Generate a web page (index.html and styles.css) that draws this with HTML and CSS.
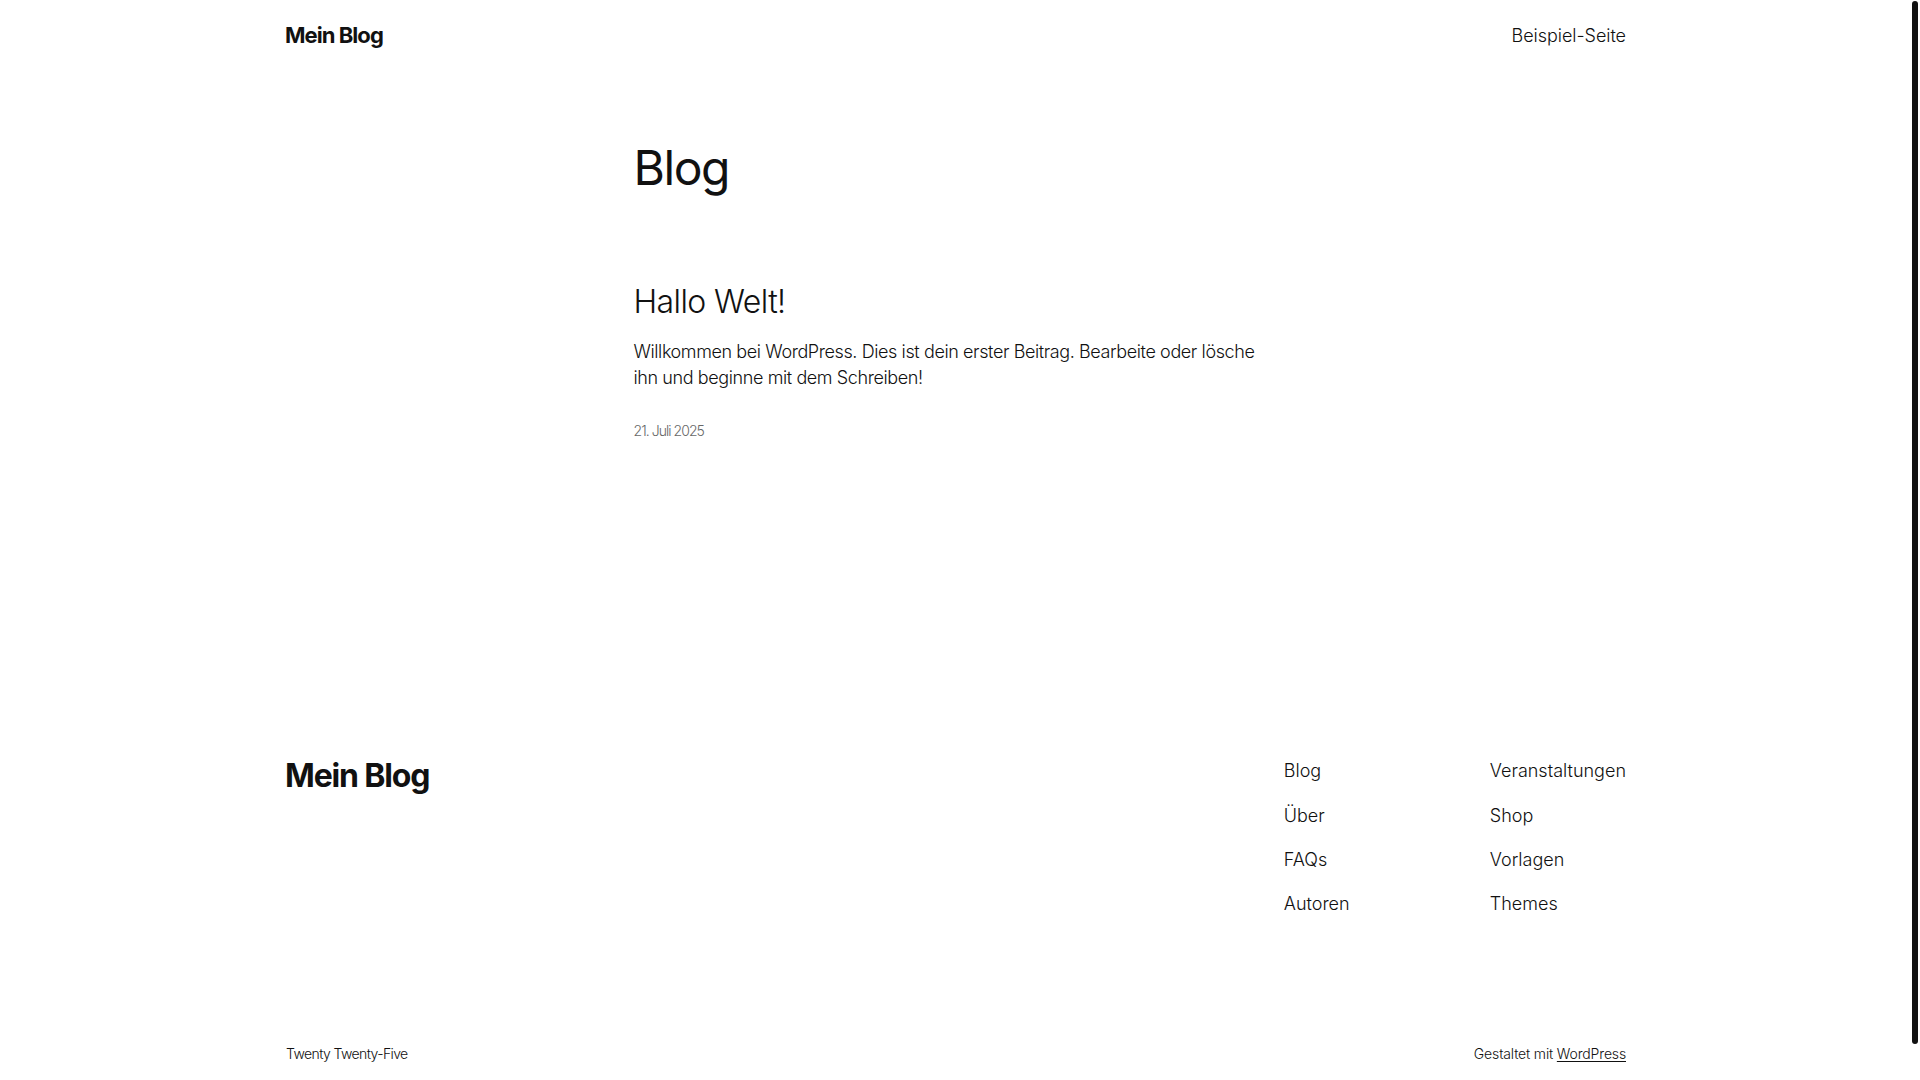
FILE: index.html
```html
<!DOCTYPE html>
<html lang="de">
<head>
<meta charset="utf-8">
<title>Mein Blog</title>
<link rel="stylesheet" href="styles.css">
</head>
<body>
<div class="site">
  <header class="site-header">
    <div class="wide row-between">
      <a class="site-title" href="#">Mein Blog</a>
      <nav class="header-nav"><a href="#">Beispiel-Seite</a></nav>
    </div>
  </header>

  <main class="site-main">
    <div class="content">
      <h1 class="page-title">Blog</h1>
      <article class="post">
        <h2 class="post-title"><a href="#">Hallo Welt!</a></h2>
        <p class="post-excerpt">Willkommen bei WordPress. Dies ist dein erster Beitrag. Bearbeite oder lösche ihn und beginne mit dem Schreiben!</p>
        <div class="post-date">21. Juli 2025</div>
      </article>
    </div>
  </main>

  <footer class="site-footer">
    <div class="wide">
      <div class="footer-top row-between">
        <a class="footer-title" href="#">Mein Blog</a>
        <div class="footer-nav">
          <ul class="nav-col">
            <li><a href="#">Blog</a></li>
            <li><a href="#">Über</a></li>
            <li><a href="#">FAQs</a></li>
            <li><a href="#">Autoren</a></li>
          </ul>
          <ul class="nav-col">
            <li><a href="#">Veranstaltungen</a></li>
            <li><a href="#">Shop</a></li>
            <li><a href="#">Vorlagen</a></li>
            <li><a href="#">Themes</a></li>
          </ul>
        </div>
      </div>
      <div class="footer-bottom row-between">
        <span class="small">Twenty Twenty-Five</span>
        <span class="small credit">Gestaltet mit <a class="ul" href="#">WordPress</a></span>
      </div>
    </div>
  </footer>
</div>
<div class="scroll-thumb" aria-hidden="true"></div>
</body>
</html>
```

FILE: styles.css
```css
body {
  margin: 0 8px 0 0;
  background: #fff;
  color: #111;
  font-family: "Inter", "Liberation Sans", sans-serif;
  font-weight: 300;
  font-size: 18px;
  line-height: 1.4;
  letter-spacing: -0.1px;
}

a {
  color: inherit;
  text-decoration: none;
}

.site {
  padding: 0 50px;
}

.wide {
  max-width: 1340px;
  margin: 0 auto;
}

.row-between {
  display: flex;
  justify-content: space-between;
}

/* fake overlay scrollbar thumb */
.scroll-thumb {
  position: fixed;
  top: 1px;
  right: 2px;
  width: 6px;
  height: 1043px;
  background: #111;
  border-radius: 3px;
}

/* Header */
.site-header {
  padding: 20px 0 20px;
}
.site-header .row-between {
  align-items: center;
}
.site-title {
  font-size: 22px;
  font-weight: 700;
  line-height: 30.8px;
  letter-spacing: -0.95px;
  margin-left: -1px;
}
.header-nav {
  font-size: 18px;
  letter-spacing: -0.05px;
}

/* Main */
.site-main {
  padding-top: 70px;
}
.content {
  max-width: 645px;
  margin: 0 auto;
}
.page-title {
  margin: 0;
  font-size: 48px;
  font-weight: 400;
  line-height: 54px;
  letter-spacing: -1.4px;
}
.post {
  padding-top: 89px;
}
.post-title {
  margin: 0;
  font-size: 32px;
  font-weight: 300;
  line-height: 36px;
  letter-spacing: -0.6px;
}
.post-excerpt {
  margin: 19.5px 0 0;
  max-width: 632px;
  font-size: 18px;
  line-height: 25.2px;
  letter-spacing: -0.4px;
}
.post-date {
  margin-top: 31px;
  font-size: 14px;
  line-height: 19.6px;
  color: #686868;
  letter-spacing: -0.95px;
}

/* Footer */
.site-footer {
  padding-top: 318px;
  padding-bottom: 54px;
}
.footer-title {
  font-size: 32px;
  font-weight: 700;
  line-height: 36px;
  letter-spacing: -1.15px;
  margin-left: -1px;
}
.footer-nav {
  display: grid;
  grid-template-columns: 206px auto;
}
.nav-col {
  list-style: none;
  margin: 0;
  padding: 0;
  display: flex;
  flex-direction: column;
  gap: 19px;
  font-size: 18px;
  line-height: 25.2px;
  letter-spacing: 0;
}
.footer-bottom {
  margin-top: 128px;
  align-items: baseline;
}
.small {
  font-size: 14px;
  line-height: 19.6px;
  letter-spacing: -0.6px;
}
.small.credit {
  letter-spacing: -0.15px;
}
.ul {
  text-decoration: underline;
  text-underline-offset: 2px;
  text-decoration-thickness: 1px;
}
```
